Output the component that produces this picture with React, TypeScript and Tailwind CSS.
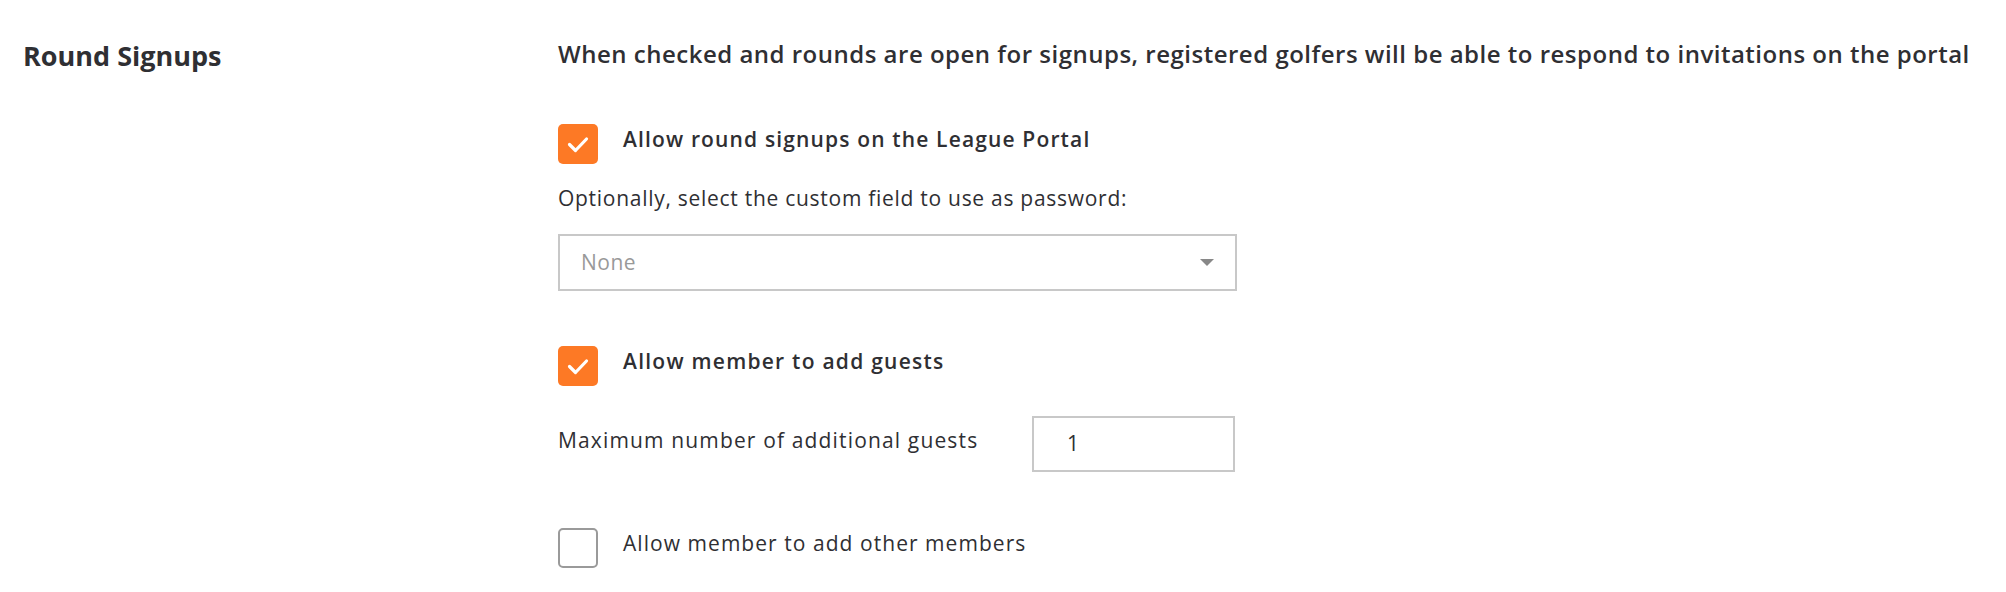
import React from 'react';

function Check({ checked }: { checked: boolean }) {
  if (!checked) {
    return <div className="w-[40px] h-[40px] shrink-0 rounded-[5px] border-2 border-[#9a9a9a] bg-white"></div>;
  }
  return (
    <div className="w-[40px] h-[40px] shrink-0 rounded-[5px] bg-[#fd7925] flex items-center justify-center">
      <svg width="40" height="40" viewBox="0 0 40 40" fill="none">
        <path d="M11.5 20.5 L17.5 26.5 L28.5 15" stroke="white" strokeWidth="3.2" strokeLinecap="round" strokeLinejoin="round" />
      </svg>
    </div>
  );
}

export default function App() {
  return (
    <div className="w-[2006px] h-[592px] bg-white text-[#2f2f33] flex pt-[39px] pl-[23px]" style={{ fontFamily: '"Open Sans", Lato, sans-serif' }}>
      <div className="w-[535px] shrink-0">
        <h2 className="text-[27px] leading-[34px] font-bold">Round Signups</h2>
      </div>
      <div className="flex flex-col">
        <p className="text-[24px] leading-[30px] font-semibold tracking-[0.5px] whitespace-nowrap">
          When checked and rounds are open for signups, registered golfers will be able to respond to invitations on the portal
        </p>

        <div className="flex items-start gap-[25px] mt-[55px]">
          <Check checked />
          <span className="text-[21px] leading-[30px] font-semibold tracking-[1.15px]">Allow round signups on the League Portal</span>
        </div>

        <p className="text-[21px] leading-[30px] mt-[19px] tracking-[0.72px]">Optionally, select the custom field to use as password:</p>

        <div className="mt-[21px] w-[679px] h-[57px] border-2 border-[#c8c8c8] flex items-center justify-between pl-[21px] pr-[21px]">
          <span className="text-[21px] text-[#999999] tracking-[0.5px]">None</span>
          <svg width="14" height="7" viewBox="0 0 14 7">
            <path d="M0 0 L14 0 L7 7 Z" fill="#888888" />
          </svg>
        </div>

        <div className="flex items-start gap-[25px] mt-[55px]">
          <Check checked />
          <span className="text-[21px] leading-[30px] font-semibold tracking-[1.25px]">Allow member to add guests</span>
        </div>

        <div className="flex items-start mt-[30px]">
          <span className="w-[474px] text-[21px] leading-[30px] mt-[9px] tracking-[1.15px]">Maximum number of additional guests</span>
          <div className="w-[203px] h-[56px] border-2 border-[#c8c8c8] flex items-center pl-[33px] text-[21px]">1</div>
        </div>

        <div className="flex items-start gap-[25px] mt-[56px]">
          <Check checked={false} />
          <span className="text-[21px] leading-[30px] tracking-[1.05px]">Allow member to add other members</span>
        </div>
      </div>
    </div>
  );
}
